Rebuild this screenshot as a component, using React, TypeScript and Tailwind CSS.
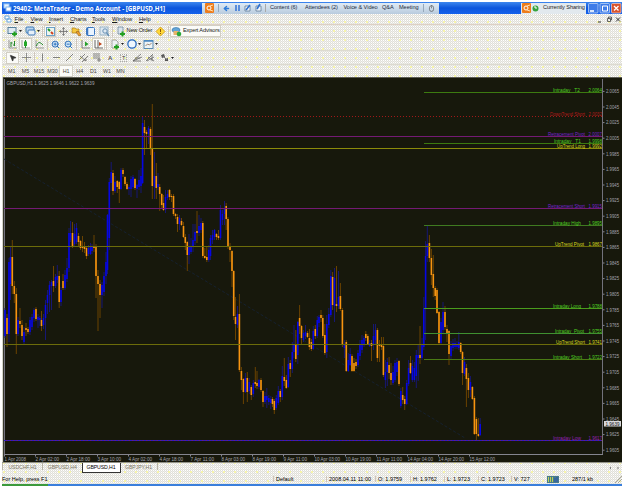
import React from 'react'
import {
	ZoomIn,
	ZoomOut,
	Move,
	ArrowLeft,
	MousePointer2,
	Clock,
	Mouse,
} from 'lucide-react'
import clsx from 'clsx'

// x, high, body top, body bottom, low, 1 = up / 0 = down
const candles = [
	[5, 308, 310, 336, 338, 1], [7, 314, 318, 334, 347, 0], [9, 258, 262, 334, 342, 1], [10.5, 246, 257, 284, 300, 1],
	[12.3, 240, 257, 286, 294, 0], [14.3, 281, 286, 294, 303, 0], [16.3, 288, 294, 334, 354, 0], [18, 317, 320, 334, 336, 1],
	[20, 308, 321, 324, 328, 0], [22, 320, 325, 336, 340, 0], [24, 327, 332, 342, 344, 1], [26, 323, 328, 330, 336, 0],
	[28, 327, 329, 332, 334, 0], [30, 317, 320, 332, 335, 1], [32, 314, 317, 327, 330, 1], [34, 308, 310, 318, 322, 1],
	[36, 307, 309, 319, 321, 0], [38, 314, 317, 320, 328, 1], [39.8, 316, 318, 320, 326, 1], [41.5, 311, 320, 326, 331, 0],
	[43.5, 314, 318, 325, 329, 1], [45.5, 300, 305, 318, 340, 1], [47.5, 290, 295, 303, 314, 1], [49.5, 281, 285, 295, 312, 1],
	[51.5, 280, 282, 286, 310, 1], [53.5, 266, 281, 286, 292, 0], [55.5, 274, 277, 286, 288, 1], [57.3, 265, 276, 280, 283, 1],
	[59.2, 271, 276, 302, 308, 0], [61, 287, 290, 302, 306, 1], [63, 274, 281, 288, 290, 0], [65, 270, 275, 288, 290, 1],
	[67, 258, 268, 279, 282, 1], [69, 228, 233, 268, 272, 1], [70.5, 221, 233, 240, 242, 1], [72.5, 222, 233, 246, 248, 0],
	[74.5, 224, 234, 244, 246, 1], [76.5, 223, 228, 242, 244, 1], [78.5, 233, 236, 242, 246, 0], [80.5, 240, 241, 248, 250, 0],
	[82.5, 236, 246, 248, 252, 0], [84.5, 242, 247, 249, 253, 0], [86.5, 246, 248, 256, 259, 0], [88.5, 245, 248, 254, 256, 1],
	[90.5, 243, 247, 254, 255, 1], [92, 244, 246, 251, 254, 1], [94, 235, 246, 248, 252, 0], [96, 244, 247, 276, 298, 0],
	[98, 270, 276, 284, 331, 0], [100, 280, 284, 295, 318, 0], [102, 282, 285, 295, 308, 1], [104, 272, 276, 292, 296, 1],
	[106, 252, 262, 276, 284, 1], [107.5, 214, 215, 270, 274, 1], [109.3, 178, 182, 238, 250, 1], [111.2, 162, 172, 183, 191, 1],
	[113, 170, 173, 191, 195, 0], [115, 176, 182, 191, 193, 1], [117.3, 180, 181, 187, 193, 0], [119.3, 181, 182, 189, 203, 0],
	[121, 168, 170, 189, 190, 1], [123, 168, 170, 174, 177, 0], [125, 176, 177, 184, 186, 0], [127, 182, 184, 189, 190, 0],
	[129, 185, 187, 189, 195, 1], [131, 176, 179, 189, 197, 1], [133, 175, 177, 187, 189, 1], [135, 178, 179, 188, 190, 0],
	[137, 184, 185, 189, 198, 1], [139, 170, 180, 187, 190, 1], [141, 168, 176, 186, 193, 1], [142.6, 117, 123, 183, 184, 1],
	[144.5, 120, 127, 133, 155, 0], [146.5, 130, 132, 134, 148, 0], [148.5, 126, 128, 134, 144, 1], [150.5, 127, 129, 149, 155, 0],
	[152.3, 104, 149, 186, 199, 0], [154.5, 152, 176, 187, 199, 1], [156.3, 163, 176, 188, 199, 0], [158, 173, 184, 187, 190, 1],
	[159.7, 184, 187, 194, 211, 0], [161.7, 193, 194, 205, 208, 0], [163.5, 195, 203, 210, 211, 0], [165.5, 190, 197, 210, 213, 1],
	[167.5, 190, 194, 198, 200, 1], [169.5, 189, 190, 197, 200, 0], [171.5, 194, 196, 197, 202, 0], [173.5, 194, 196, 214, 216, 0],
	[175.5, 213, 214, 216, 219, 0], [177.5, 214, 217, 224, 232, 0], [179.5, 215, 218, 224, 230, 1], [181.5, 218, 221, 225, 226, 0],
	[183.5, 222, 226, 237, 238, 0], [185.3, 234, 237, 243, 250, 0], [187.3, 241, 242, 255, 271, 0], [189, 234, 246, 255, 264, 1],
	[191, 238, 247, 252, 254, 1], [193, 224, 240, 247, 252, 1], [195, 224, 232, 241, 245, 1], [197, 211, 231, 233, 243, 0],
	[199, 215, 226, 233, 236, 1], [201, 218, 223, 230, 233, 1], [202.8, 221, 223, 256, 258, 0], [204.8, 248, 256, 258, 259, 0],
	[206.8, 246, 257, 260, 262, 0], [208.8, 245, 250, 260, 262, 1], [210.5, 235, 238, 256, 260, 1], [212.5, 230, 235, 240, 244, 1],
	[214.5, 229, 230, 237, 240, 1], [216.5, 233, 234, 237, 240, 0], [218.5, 230, 236, 238, 240, 0], [220.5, 205, 210, 238, 240, 1],
	[222.5, 210, 214, 220, 225, 1], [224.5, 201, 208, 214, 225, 1], [226.2, 203, 206, 219, 230, 0], [228, 217, 219, 246, 249, 0],
	[230, 243, 246, 250, 262, 0], [232, 250, 251, 271, 287, 0], [233.7, 270, 271, 316, 320, 0], [235.5, 297, 317, 324, 340, 0],
	[237.5, 306, 314, 325, 328, 1], [239.4, 294, 314, 370, 372, 0], [241.4, 367, 371, 380, 390, 0], [243.4, 378, 379, 392, 404, 0],
	[245.4, 373, 378, 392, 393, 1], [247.3, 372, 378, 392, 402, 0], [249.3, 378, 382, 391, 394, 1], [251.3, 385, 387, 395, 400, 0],
	[253.3, 380, 383, 394, 397, 1], [255.3, 367, 382, 384, 388, 0], [257, 371, 383, 386, 389, 0], [259, 379, 380, 387, 389, 1],
	[261, 378, 380, 390, 392, 0], [263, 390, 391, 402, 407, 0], [265, 392, 396, 402, 404, 1], [266.8, 388, 396, 400, 408, 1],
	[268.8, 395, 398, 402, 405, 1], [270.8, 396, 399, 403, 409, 1], [272.5, 397, 399, 404, 407, 0], [274.3, 399, 401, 410, 414, 0],
	[276.3, 395, 398, 408, 410, 1], [278.3, 386, 391, 403, 405, 1], [280.3, 389, 391, 397, 402, 0], [282.3, 366, 376, 397, 400, 1],
	[284.3, 358, 377, 381, 386, 0], [286.3, 375, 380, 388, 389, 0], [288.3, 357, 364, 387, 388, 1], [290.3, 360, 363, 369, 377, 0],
	[292.3, 342, 352, 369, 373, 1], [294, 325, 344, 352, 358, 1], [295.8, 330, 344, 359, 362, 0], [297.8, 321, 322, 355, 364, 1],
	[299.6, 305, 318, 326, 334, 0], [301.5, 325, 326, 338, 344, 0], [303.5, 330, 333, 340, 342, 1], [305.5, 325, 332, 336, 339, 1],
	[307.5, 331, 333, 337, 338, 0], [309.4, 329, 338, 347, 350, 0], [311.4, 339, 342, 349, 351, 0], [313.3, 326, 331, 349, 350, 1],
	[315.3, 325, 329, 336, 339, 0], [317.3, 316, 320, 336, 338, 1], [319, 315, 317, 323, 327, 1], [321, 310, 315, 318, 322, 0],
	[322.8, 315, 318, 336, 338, 0], [324.8, 324, 335, 353, 355, 0], [326.8, 315, 324, 352, 358, 1], [328.8, 308, 314, 325, 328, 1],
	[330.8, 270, 276, 315, 317, 1], [332.6, 272, 277, 305, 310, 0], [334.5, 268, 278, 306, 322, 1], [336.5, 266, 304, 306, 312, 0],
	[338.5, 271, 297, 306, 309, 1], [340.4, 283, 296, 309, 311, 0], [342.4, 308, 310, 345, 347, 0], [344.4, 340, 344, 348, 358, 1],
	[346.3, 340, 342, 371, 372, 0], [348.3, 353, 360, 371, 372, 1], [350.2, 348, 354, 365, 366, 1], [352, 354, 356, 371, 372, 0],
	[354, 358, 363, 371, 372, 0], [356, 359, 362, 366, 369, 0], [358, 350, 353, 365, 367, 1], [360, 340, 345, 356, 360, 1],
	[362, 335, 340, 350, 353, 1], [364, 336, 338, 345, 347, 1], [365.8, 331, 334, 338, 341, 0], [367.8, 334, 336, 344, 345, 0],
	[369.6, 340, 343, 346, 347, 1], [371.5, 340, 343, 346, 361, 0], [373.5, 324, 336, 345, 350, 1], [375.5, 324, 330, 340, 344, 1],
	[377.4, 328, 330, 358, 362, 0], [379.5, 340, 344, 346, 362, 0], [381.5, 337, 345, 347, 350, 0], [383.4, 337, 346, 375, 377, 0],
	[385.4, 360, 372, 380, 388, 1], [387.3, 358, 362, 372, 386, 1], [389.1, 357, 365, 373, 379, 0], [391, 363, 373, 380, 385, 0],
	[393, 366, 372, 383, 385, 1], [395, 360, 363, 380, 382, 1], [397, 358, 362, 372, 376, 1], [399, 360, 361, 384, 386, 0],
	[400.8, 388, 391, 406, 408, 1], [402.7, 387, 395, 400, 404, 0], [404.7, 396, 399, 404, 410, 0], [406.7, 380, 383, 404, 405, 1],
	[408.6, 360, 368, 384, 386, 1], [410.5, 356, 363, 373, 374, 0], [412.4, 360, 366, 380, 382, 1], [414.4, 362, 368, 380, 382, 1],
	[416.3, 350, 355, 376, 388, 1], [418.2, 345, 355, 358, 381, 1], [420, 326, 355, 358, 364, 0], [422, 338, 345, 358, 360, 1],
	[423.8, 297, 308, 347, 350, 1], [425.6, 241, 256, 308, 340, 1], [427.3, 226, 244, 256, 262, 1], [429.4, 235, 243, 258, 262, 0],
	[431.4, 249, 258, 275, 285, 0], [433.3, 255, 274, 288, 297, 0], [435.2, 286, 288, 296, 300, 0], [437, 288, 290, 313, 314, 0],
	[439, 311, 312, 343, 344, 0], [441, 318, 322, 343, 344, 1], [443, 302, 312, 330, 334, 1], [445, 306, 312, 327, 330, 0],
	[447, 325, 329, 333, 342, 0], [449, 330, 331, 354, 365, 0], [451, 341, 346, 356, 359, 1], [453, 339, 343, 348, 351, 1],
	[455, 338, 343, 347, 349, 1], [457, 341, 344, 347, 349, 1], [458.8, 332, 342, 348, 350, 1], [460.7, 342, 343, 352, 354, 0],
	[462.5, 351, 352, 373, 385, 0], [464.5, 357, 362, 374, 376, 1], [466.4, 364, 368, 379, 407, 0], [468.4, 373, 378, 390, 398, 0],
	[470.4, 376, 382, 390, 397, 1], [472.4, 386, 387, 399, 400, 0], [474.4, 396, 398, 434, 435, 0], [476.4, 417, 419, 434, 440, 0],
	[478.4, 418, 434, 436, 437, 0], [480.2, 418, 424, 435, 436, 1],
]

const levels = [
	{ y: 92.5, from: 424, color: '#3c7a10', name: 'Intraday   T2', price: '2.0064', text: '#4fd022', x: 553, w: 27 },
	{ y: 116.5, from: 4, color: '#a01818', name: 'DownTrend Short', price: '2.0032', text: '#b41a1a', x: 550, w: 35, dash: '1 2' },
	{ y: 136.5, from: 4, color: '#741a74', name: 'Retracement Pivot', price: '2.0007', text: '#7422d0', x: 548, w: 37 },
	{ y: 143.5, from: 424, color: '#3c7a10', name: 'Intraday   T1', price: '1.9998', text: '#4fd022', x: 554, w: 27 },
	{ y: 148.5, from: 4, color: '#8c8c0a', name: 'UpTrend Long', price: '1.9992', text: '#d8d81e', x: 557, w: 28 },
	{ y: 208.5, from: 4, color: '#741a74', name: 'Retracement Short', price: '1.9915', text: '#7422d0', x: 548, w: 37 },
	{ y: 225.5, from: 424, color: '#3f7a20', name: 'Intraday High', price: '1.9895', text: '#4fd022', x: 553, w: 28 },
	{ y: 246.5, from: 4, color: '#6c6c0a', name: 'UpTrend Pivot', price: '1.9867', text: '#d8d81e', x: 555, w: 29 },
	{ y: 308.5, from: 424, color: '#4a9c1c', name: 'Intraday Long', price: '1.9788', text: '#4fd022', x: 553, w: 28 },
	{ y: 333.5, from: 424, color: '#3f9030', name: 'Intraday  Pivot', price: '1.9755', text: '#4fd022', x: 555, w: 29 },
	{ y: 344.5, from: 4, color: '#6c6c0a', name: 'UpTrend Short', price: '1.9741', text: '#d8d81e', x: 556, w: 29 },
	{ y: 359.5, from: 424, color: '#4a7a14', name: 'Intraday Short', price: '1.9722', text: '#4fd022', x: 553, w: 29 },
	{ y: 440.5, from: 4, color: '#6a1a86', name: 'Intraday Low', price: '1.9617', text: '#9420b4', x: 553, w: 28 },
]

const dates = [
	'1 Apr 2008', '2 Apr 02:00', '2 Apr 18:00', '3 Apr 10:00', '4 Apr 02:00', '4 Apr 18:00', '7 Apr 11:00', '8 Apr 03:00',
	'8 Apr 19:00', '9 Apr 11:00', '10 Apr 03:00', '10 Apr 19:00', '11 Apr 11:00', '14 Apr 04:00', '14 Apr 20:00', '15 Apr 12:00',
]

const prices = Array.from({ length: 24 }, (_, i) => (2.0065 - i * 0.002).toFixed(4))

function Chart() {
	return (
		<svg
			width="620"
			height="386"
			viewBox="2 77 620 386"
			className="block font-['Liberation_Sans',sans-serif]"
		>
			<rect x="2" y="77" width="620" height="386" fill="#17180c" />
			<path d="M2 77.5H622M3 77V463" stroke="#5c5c55" />
			<path d="M2.5 77V463" stroke="#d6d6cc" />
			<path d="M4.5 79V455M602.5 79V455" stroke="#72727c" />
			<path d="M4 454.5H603" stroke="#85858f" />
			<path d="M4 159L465 438" stroke="#152338" strokeWidth="0.8" strokeDasharray="3 2" />
			{candles.map(([x, high, top, bottom, low, up]) => (
				<g key={x}>
					<rect x={x - 0.5} y={high} width="1" height={low - high} fill={up ? '#171773' : '#6a4200'} />
					<rect x={x - 0.8} y={top} width="1.6" height={bottom - top} fill={up ? '#0606e4' : '#f79410'} />
				</g>
			))}
			{levels.map((l) => (
				<g key={l.y}>
					<path d={`M${l.from} ${l.y}H602`} stroke={l.color} strokeDasharray={l.dash} />
					<g fontSize="5" fill={l.text}>
						<text x={l.x} y={l.y - 0.7} textLength={l.w} lengthAdjust="spacingAndGlyphs" xmlSpace="preserve">
							{l.name}
						</text>
						<text x="588.5" y={l.y - 0.7} textLength="13.5" lengthAdjust="spacingAndGlyphs">
							{l.price}
						</text>
					</g>
				</g>
			))}
			<path d="M4 440.5H602" stroke="#2b1cc8" strokeDasharray="2 1.5" />
			<g fontSize="4.8" fill="#a6a6b0">
				{prices.map((p, i) => (
					<g key={p}>
						<path d={`M603 ${91.4 + i * 15.6}h1.5`} stroke="#85858f" />
						<text x="606" y={93.2 + i * 15.6} textLength="13" lengthAdjust="spacingAndGlyphs">
							{p}
						</text>
					</g>
				))}
				{dates.map((d, i) => (
					<g key={d}>
						<path d={`M${4.5 + i * 31} 455v1.5`} stroke="#85858f" />
						<text x={4.5 + i * 31} y="460.8" textLength={i === 0 ? 21.5 : i < 10 ? 23.5 : 25.5} lengthAdjust="spacingAndGlyphs">
							{d}
						</text>
					</g>
				))}
				<text x="6.5" y="84.6" textLength="88" lengthAdjust="spacingAndGlyphs">
					GBPUSD,H1 1.9625 1.9646 1.9622 1.9639
				</text>
			</g>
			<rect x="604" y="421" width="17" height="5.5" fill="#d8d8da" />
			<text x="605.5" y="425.6" fontSize="4.8" textLength="14" lengthAdjust="spacingAndGlyphs" fill="#111">
				1.9639
			</text>
			<path d="M2 462.5H622" stroke="#94948a" />
		</svg>
	)
}

const Svg = ({ children }: { children: React.ReactNode }) => (
	<svg width="11" height="11" viewBox="0 0 11 11" fill="none" className="shrink-0">
		{children}
	</svg>
)

const Plus = () => <path d="M5 8h5M7.5 5.5v5" stroke="#23a021" strokeWidth="2" />

const Caret = () => (
	<svg width="3" height="2" viewBox="0 0 3 2" className="shrink-0">
		<path d="M0 0h3L1.5 2z" fill="#222" />
	</svg>
)

// Toolbar slot: w is a full class so the icons keep their spacing
function Cell({ w, active, children }: { w: string; active?: boolean; children?: React.ReactNode }) {
	return (
		<div
			className={clsx(
				'flex h-[12px] shrink-0 items-center justify-center gap-[1px] whitespace-nowrap',
				w,
				active && 'border border-[#d2cfc4] bg-[#fbfbf8]',
			)}
		>
			{children}
		</div>
	)
}

const Sep = () => <div className="mx-[1px] h-[11px] w-px shrink-0 bg-[#cfc6bb]" />

const NewChart = () => (
	<Svg>
		<rect x="1" y="1.5" width="8" height="6" fill="#dfeaf2" stroke="#557f9c" />
		<Plus />
	</Svg>
)

function StandardBar() {
	return (
		<div className="flex h-[13px] items-center border-b border-[#dcdad0] pl-[4px]">
			<Cell w="w-[17px]"><NewChart /><Caret /></Cell>
			<Cell w="w-[18px]">
				<Svg>
					<rect x="1" y="1" width="8" height="6" rx="1" fill="#b9d5ef" stroke="#3d79b8" />
					<rect x="3" y="4" width="7" height="5" rx="1" fill="#e7f0f8" stroke="#3d79b8" />
				</Svg>
				<Caret />
			</Cell>
			<Sep />
			<Cell w="w-[12px]" active>
				<Svg>
					<rect x="1.5" y="1.5" width="8" height="8" fill="#eef5ee" stroke="#6aa0c8" />
					<path d="M3 3l2 2" stroke="#1c9a2c" strokeWidth="2" />
					<path d="M6 6l2 2" stroke="#d0401c" strokeWidth="2" />
				</Svg>
			</Cell>
			<Cell w="w-[14px]"><Move size={9} color="#666" /></Cell>
			<Cell w="w-[13px]">
				<Svg>
					<path d="M1 2h3l1 1h3v4H1z" fill="#f5c740" stroke="#b08018" strokeWidth=".7" />
					<path d="M5 6l2-1 3 4-2 1z" fill="#f0a030" stroke="#9a6414" strokeWidth=".7" />
				</Svg>
			</Cell>
			<Cell w="w-[14px]">
				<Svg>
					<rect x="1.5" y="1.5" width="8" height="8" rx="1" fill="#e9f4ff" stroke="#3b78c2" />
					<path d="M2.5 2v7" stroke="#3b78c2" strokeWidth="1.5" />
				</Svg>
			</Cell>
			<Cell w="w-[14px]">
				<Svg>
					<rect x="1" y="1" width="8" height="8" fill="#dfe9f1" stroke="#86a5bd" strokeWidth=".8" />
					<circle cx="6" cy="5" r="2.2" stroke="#6790b4" />
					<path d="M7.5 6.5L10 10" stroke="#6790b4" strokeWidth="1.4" />
				</Svg>
			</Cell>
			<Sep />
			<Cell w="w-[39px]">
				<Svg>
					<path d="M3 1h5v7H3z" fill="#dbe5ee" stroke="#70889c" strokeWidth=".8" />
					<Plus />
				</Svg>
				<span className="w-[26px] text-[5.6px] tracking-[-0.15px]">New Order</span>
			</Cell>
			<Cell w="w-[14px]">
				<Svg>
					<path d="M5.5 1L10 5.5 5.5 10 1 5.5z" fill="#ffd838" stroke="#d19b13" strokeWidth=".8" />
					<path d="M5.5 3v3M5.5 7v1" stroke="#8a5708" />
				</Svg>
			</Cell>
			<Sep />
			<Cell w="w-[51px]" active>
				<Svg>
					<ellipse cx="5" cy="4" rx="4" ry="2.5" fill="#63a6d8" stroke="#2b6da8" strokeWidth=".6" />
					<rect x="2.5" y="5" width="5" height="4" fill="#e8b46a" />
					<circle cx="8" cy="8" r="2.3" fill="#2aa838" />
				</Svg>
				<span className="w-[37px] text-[5.6px] tracking-[-0.15px]">Expert Advisors</span>
			</Cell>
		</div>
	)
}

function ChartBar() {
	return (
		<div className="flex h-[13px] items-center border-b border-[#dcdad0] pl-[4px]">
			<Cell w="w-[13px]">
				<Svg>
					<path d="M2 1v8h8" stroke="#777" strokeWidth=".7" />
					<path d="M4 3v5M4 4h1.5M7.5 2v5M6 6h1.5" stroke="#24882a" />
				</Svg>
			</Cell>
			<Cell w="w-[13px]" active>
				<Svg>
					<path d="M2 1v8h8" stroke="#777" strokeWidth=".7" />
					<path d="M5.5 1v8" stroke="#24882a" />
					<rect x="4" y="2.5" width="3" height="4.5" fill="#24a82a" />
				</Svg>
			</Cell>
			<Cell w="w-[14px]">
				<Svg>
					<path d="M2 1v8h8" stroke="#777" strokeWidth=".7" />
					<path d="M2.5 7C4 2 6 3 9 6" stroke="#24882a" />
				</Svg>
			</Cell>
			<Sep />
			<Cell w="w-[13px]"><ZoomIn size={9} color="#2d70b8" strokeWidth={2.6} fill="#cfe6fa" /></Cell>
			<Cell w="w-[13px]"><ZoomOut size={9} color="#2d70b8" strokeWidth={2.6} fill="#cfe6fa" /></Cell>
			<Sep />
			<Cell w="w-[14px]">
				<Svg>
					<path d="M2 1v8h8" stroke="#666" strokeWidth=".8" />
					<path d="M5 2.5L8.5 5 5 7.5z" fill="#24a02a" />
				</Svg>
			</Cell>
			<Cell w="w-[13px]" active>
				<Svg>
					<path d="M2 1v8h8M5 1v8" stroke="#555" strokeWidth=".9" />
					<path d="M6 3L9 5 6 7z" fill="#c0451c" />
				</Svg>
			</Cell>
			<Sep />
			<Cell w="w-[17px]">
				<Svg>
					<path d="M3 1h4l2 2v6H3z" fill="#eef2f4" stroke="#888" strokeWidth=".7" />
					<Plus />
				</Svg>
				<Caret />
			</Cell>
			<Cell w="w-[17px]"><Clock size={10} color="#2368bd" strokeWidth={3} fill="#eef7ff" /><Caret /></Cell>
			<Cell w="w-[17px]">
				<Svg>
					<rect x="1" y="1.5" width="9" height="8" fill="#eef4f6" stroke="#5a8bb0" />
					<path d="M1 2h9" stroke="#4787c4" strokeWidth="1.5" />
					<path d="M2.5 7l2-2 2 1 2-2" stroke="#8a6a50" strokeWidth=".8" />
				</Svg>
				<Caret />
			</Cell>
		</div>
	)
}

const lineTools = [
	'M5.5 1v9M1 5.5h9',
	'M5.5 1.5v8',
	'M2 5.5h7',
	'M2 9l7-7',
	'M1 8l6-6M4 10l6-6M2 4l6 5M6 8h3',
	'M2 2h7M2 4h7M2 6h7M6 8h4M8 6v4',
]

function LineBar() {
	return (
		<div className="flex h-[14px] items-center border-b border-[#dcdad0] pl-[4px]">
			<Cell w="w-[13px]" active><MousePointer2 size={8} color="#333" fill="#333" /></Cell>
			<Cell w="w-[14px]"><Svg><path d={lineTools[0]} stroke="#777" strokeWidth=".8" /></Svg></Cell>
			<Sep />
			{lineTools.slice(1).map((d) => (
				<Cell key={d} w="w-[13.5px]"><Svg><path d={d} stroke="#666" strokeWidth=".8" /></Svg></Cell>
			))}
			<Cell w="w-[13.5px]"><span className="text-[6px] font-bold text-[#555]">A</span></Cell>
			<Cell w="w-[13.5px]">
				<span className="border border-dotted border-[#aaa] px-[1px] text-[5.5px] leading-[6px] text-[#444]">T</span>
			</Cell>
			<Cell w="w-[13.5px]"><Svg><path d="M1 9l8-7M1 9l9-4M1 9h8M3 6h5" stroke="#666" strokeWidth=".8" /></Svg></Cell>
			<Cell w="w-[13.5px]"><Svg><path d="M1 9l7-7M3 5l6 4M7 3v6M2 9l7-4" stroke="#666" strokeWidth=".8" /></Svg></Cell>
			<Cell w="w-[18px]">
				<Svg>
					<path d="M2 3l3-1 1 3-3 1zM6 7l3-1v3H6z" fill="#555" />
					<path d="M4 4l4 4" stroke="#777" />
				</Svg>
				<Caret />
			</Cell>
		</div>
	)
}

const periods = ['M1', 'M5', 'M15', 'M30', 'H1', 'H4', 'D1', 'W1', 'MN']

function PeriodBar() {
	return (
		<div className="flex h-[12px] items-center pl-[3px] text-[5.4px] text-[#4a483e]">
			{periods.map((p) => (
				<Cell key={p} w="w-[13.6px]" active={p === 'H1'}>
					<span className="pt-px">{p}</span>
				</Cell>
			))}
		</div>
	)
}

const OrangeBadge = () => (
	<svg width="9" height="10" viewBox="0 0 9 10" className="shrink-0">
		<rect width="9" height="10" rx="1" fill="#ee7d1c" />
		<circle cx="4" cy="5" r="2" fill="none" stroke="#fff" />
		<path d="M5 3l3-1M5 7l3 1" stroke="#ffe0b0" />
	</svg>
)

function TitleBar() {
	return (
		<div className="flex h-[12px] items-center bg-gradient-to-b from-[#3c86ee] via-[#0c55dc] to-[#1461ec]">
			<svg width="9" height="10" viewBox="0 0 9 10" className="ml-px shrink-0">
				<rect x="1" y="1" width="5" height="4" fill="#e8f3ff" stroke="#9cc8f6" />
				<rect x="3" y="4" width="5" height="4" fill="#fff" stroke="#7cb2ee" />
			</svg>
			<svg width="188" height="12" viewBox="0 0 188 12" className="shrink-0 font-['Open_Sans',sans-serif]">
				<text x="1" y="8.6" fontSize="7" fontWeight="700" fill="#fff" textLength="152" lengthAdjust="spacingAndGlyphs">
					29402: MetaTrader - Demo Account - [GBPUSD,H1]
				</text>
			</svg>
			<div className="ml-[2px] flex h-[11px] w-[237px] shrink-0 items-center bg-gradient-to-b from-[#e0ebf5] to-[#b8cbde] pl-[3px] text-[5.6px] tracking-[-0.05px] whitespace-nowrap text-[#20283c]">
				<OrangeBadge />
				<div className="ml-[4px] h-[8px] w-px bg-[#96a8ba]" />
				<ArrowLeft size={7} color="#2d7bd8" strokeWidth={5} className="ml-[4px]" />
				<svg width="30" height="10" viewBox="0 0 30 10" className="ml-[2px] shrink-0">
					<path d="M4 2v6M7 2v6" stroke="#3b78d8" strokeWidth="1.6" />
					<path d="M13 3h5v5h-5zM24 3h5v5h-5z" fill="#f5f7fa" stroke="#5c7998" strokeWidth=".8" />
					<path d="M14 7l4-5M25 6l3-5" stroke="#2d70d0" strokeWidth="1.6" />
				</svg>
				<div className="mr-[4px] ml-[3px] h-[8px] w-px bg-[#a8a8a8]" />
				<span className="w-[35px] shrink-0">Content (6)</span>
				<span className="w-[38.5px] shrink-0">Attendees (2)</span>
				<span className="w-[38.5px] shrink-0">Voice &amp; Video</span>
				<span className="w-[17px] shrink-0">Q&amp;A</span>
				<span className="w-[24px] shrink-0">Meeting</span>
				<div className="mr-[4px] h-[8px] w-px bg-[#96a8ba]" />
				<Mouse size={7} color="#444" className="shrink-0" />
			</div>
			<div className="ml-[82px] flex h-[11px] w-[65px] shrink-0 items-center bg-[#e2e9ee] pl-px text-[5.6px] tracking-[-0.1px] whitespace-nowrap text-[#222]">
				<OrangeBadge />
				<svg width="7" height="7" viewBox="0 0 7 7" className="mr-[4px] ml-px shrink-0">
					<circle cx="3.5" cy="3.5" r="3" fill="#36a43c" />
					<path d="M2 2h2v2" stroke="#fff" fill="none" />
				</svg>
				Currently Sharing
			</div>
			<svg width="34" height="12" viewBox="0 0 34 12" className="ml-[2px] shrink-0">
				<rect x=".5" y="1.5" width="9.5" height="9.5" rx="1" fill="#3f7ce8" stroke="#cfdff8" strokeWidth=".7" />
				<path d="M2 9h4" stroke="#fff" strokeWidth="1.6" />
				<rect x="12" y="1.5" width="9.5" height="9.5" rx="1" fill="#3f7ce8" stroke="#cfdff8" strokeWidth=".7" />
				<path d="M14.5 4h5v5h-5z" stroke="#fff" fill="none" />
				<rect x="23.5" y="1.5" width="9.5" height="9.5" rx="1" fill="#d9532c" stroke="#f3d3c8" strokeWidth=".7" />
				<path d="M26 4l4.5 4.5M30.5 4L26 8.5" stroke="#fff" strokeWidth="1.3" />
			</svg>
		</div>
	)
}

const menus = [
	{ label: 'File', w: 'w-[16px]' },
	{ label: 'View', w: 'w-[18.5px]' },
	{ label: 'Insert', w: 'w-[21px]' },
	{ label: 'Charts', w: 'w-[22px]' },
	{ label: 'Tools', w: 'w-[20px]' },
	{ label: 'Window', w: 'w-[27px]' },
	{ label: 'Help', w: 'w-[14px]' },
]

function MenuBar() {
	return (
		<div className="flex h-[11px] items-center border-b border-[#ddd0c4] pl-[2px] text-[5.8px] tracking-[-0.1px]">
			<svg width="8" height="8" viewBox="0 0 8 8" className="mr-[2.5px] shrink-0">
				<path d="M1 1h4v3H1zM3 4h4v3H3z" fill="#fff" stroke="#65a5dc" />
			</svg>
			{menus.map((m) => (
				<span key={m.label} className={clsx('shrink-0 pt-px', m.w)}>
					<span className="underline decoration-[0.5px]">{m.label[0]}</span>
					{m.label.slice(1)}
				</span>
			))}
			<svg width="24" height="7" viewBox="0 0 24 7" className="mr-[1px] ml-auto shrink-0">
				<path d="M1 6h3" stroke="#333" />
				<path d="M10.5 2.5h3v3h-3zM11.5 2.5v-1.5h3v3h-1" stroke="#444" strokeWidth=".8" fill="none" />
				<path d="M19 1.5l4 4M23 1.5l-4 4" stroke="#333" />
			</svg>
		</div>
	)
}

function Tabs() {
	return (
		<div className="flex h-[11px] items-start text-[5.2px] tracking-[-0.1px] text-[#7c7766]">
			<span className="w-[40px] border-l border-[#b8b4a6] pt-[2px] text-center">USDCHF,H1</span>
			<span className="w-[39.5px] border-l border-[#b8b4a6] pt-[2px] text-center">GBPUSD,H4</span>
			<span className="h-[10px] w-[39px] border border-t-0 border-[#333] bg-white pt-[2px] text-center text-black">
				GBPUSD,H1
			</span>
			<span className="w-[37px] border-r border-[#b8b4a6] pt-[2px] text-center">GBPJPY,H1</span>
			<svg width="12" height="5" viewBox="0 0 12 5" className="mt-[3px] mr-[2px] ml-auto">
				<path d="M3 0.5v3L1.5 2zM9.5 0.5v3L11 2z" fill="#777" />
			</svg>
		</div>
	)
}

const quotes = [
	{ label: '2008.04.11 11:00', w: 'w-[49px]' },
	{ label: 'O: 1.9759', w: 'w-[35px]' },
	{ label: 'H: 1.9762', w: 'w-[34px]' },
	{ label: 'L: 1.9723', w: 'w-[34px]' },
	{ label: 'C: 1.9723', w: 'w-[33px]' },
	{ label: 'V: 727', w: 'w-[33px]' },
]

function StatusBar() {
	return (
		<div className="flex h-[10px] items-center text-[5.5px] whitespace-nowrap text-black">
			<span className="w-[271px] shrink-0 pt-px">For Help, press F1</span>
			<span className="w-[53px] shrink-0 border-l border-[#d0c4b8] pt-px pl-[2px]">Default</span>
			{quotes.map((q) => (
				<span key={q.label} className={clsx('shrink-0 border-l border-[#d0c4b8] pt-px pl-[2px]', q.w)}>
					{q.label}
				</span>
			))}
			<svg width="13" height="7" viewBox="0 0 13 7" className="ml-[3px] shrink-0">
				<rect width="12" height="7" fill="#477b8c" />
				<path d="M1.5 1v5M3.5 1v5M5.5 1v5" stroke="#b9d058" />
				<path d="M8 2v4M10 1v5" stroke="#2a56b0" />
			</svg>
			<span className="ml-[12px] pt-px">287/1 kb</span>
			<svg width="7" height="8" viewBox="0 0 7 8" className="ml-auto shrink-0">
				<path d="M0 8l7-7M3 8l4-4" stroke="#aaa797" />
			</svg>
		</div>
	)
}

export default function App() {
	return (
		<div className="h-[486px] w-[625px] overflow-hidden bg-white pt-[2px] pl-[2px] font-['Liberation_Sans',sans-serif] leading-none text-[#1c1c1c]">
			<div className="w-[620px] bg-[radial-gradient(circle_at_2px_2px,#f7f5a8_0.7px,transparent_1px),conic-gradient(#ffffff_25%,#e0dfd8_0_50%,#eeeeea_0_75%,#e0dfd8_0)] bg-[length:11px_9px,2px_2px]">
				<TitleBar />
				<MenuBar />
				<StandardBar />
				<ChartBar />
				<LineBar />
				<PeriodBar />
				<Chart />
				<Tabs />
				<StatusBar />
				<div className="flex h-[2px] bg-[#3a7fdc]">
					<div className="w-[46px] bg-[#3c9a3c]" />
				</div>
			</div>
		</div>
	)
}
